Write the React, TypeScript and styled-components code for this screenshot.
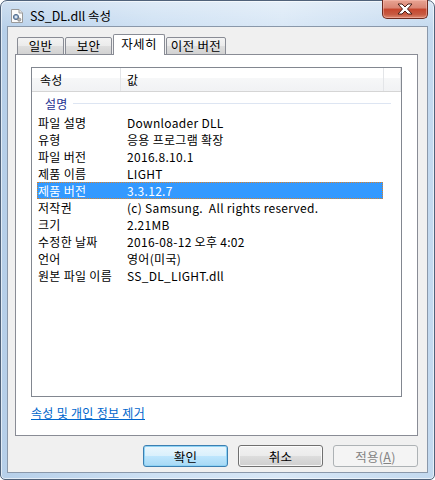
import styled, { createGlobalStyle } from "styled-components";

const GlobalStyle = createGlobalStyle`
  html, body {
    margin: 0;
    padding: 0;
    background: #ffffff;
  }
  body {
    font-family: "Noto Sans CJK KR", "Liberation Sans", sans-serif;
    font-size: 12px;
    letter-spacing: 0.3px;
    color: #000;
  }
`;

const Window = styled.div`
  box-sizing: border-box;
  width: 435px;
  height: 480px;
  display: flex;
  flex-direction: column;
  padding: 0 6px 6px 6px;
  border: 1px solid #50627a;
  border-radius: 7px 7px 5px 5px;
  background:
    linear-gradient(180deg, rgba(255, 255, 255, 0.35) 0%, rgba(255, 255, 255, 0) 30px),
    linear-gradient(90deg, #b6cfe9 0%, #cde0f3 35%, #d8e7f6 65%, #c3d9ef 100%);
  box-shadow: inset 0 0 0 1px rgba(255, 255, 255, 0.6);
`;

const TitleBar = styled.div`
  height: 27px;
  display: flex;
  align-items: flex-start;
  justify-content: space-between;
`;

const TitleLeft = styled.div`
  display: flex;
  align-items: center;
  gap: 7px;
  padding: 7px 0 0 4px;
`;

const TitleText = styled.span`
  font-size: 12.5px;
  letter-spacing: 0;
  line-height: 16px;
  color: #000;
`;

const CloseButton = styled.div`
  box-sizing: border-box;
  width: 46px;
  height: 19px;
  margin-top: -1px;
  display: flex;
  align-items: center;
  justify-content: center;
  border: 1px solid #6d2b20;
  border-top: none;
  border-radius: 0 0 5px 5px;
  background: linear-gradient(
    180deg,
    #e8a493 0%,
    #d98473 45%,
    #c6452d 50%,
    #c75a42 80%,
    #dd8a72 100%
  );
  box-shadow: inset 0 0 0 1px rgba(255, 200, 190, 0.45);
`;

const Client = styled.div`
  flex: 1;
  display: flex;
  flex-direction: column;
  border: 1px solid #8a98aa;
  background: #f0f0f0;
  padding: 7px 9px 5px 7px;
`;

const TabRow = styled.div`
  display: flex;
  align-items: flex-end;
  height: 21px;
  padding-left: 2px;
  margin-bottom: -1px;
  position: relative;
  z-index: 1;
`;

const Tab = styled.div<{ $w: number; $active?: boolean }>`
  box-sizing: border-box;
  width: ${(p) => p.$w}px;
  height: ${(p) => (p.$active ? 21 : 18)}px;
  margin-right: 1px;
  border: 1px solid #898c95;
  border-bottom: ${(p) => (p.$active ? "none" : "1px solid #898c95")};
  border-radius: 2px 2px 0 0;
  background: ${(p) =>
    p.$active
      ? "#ffffff"
      : "linear-gradient(180deg, #f3f3f3 0%, #ebebeb 50%, #dedede 50%, #d2d2d2 100%)"};
  font-size: 12.5px;
  line-height: ${(p) => (p.$active ? 17 : 16)}px;
  text-align: center;
  white-space: nowrap;
`;

const Panel = styled.div`
  box-sizing: border-box;
  height: 382px;
  display: flex;
  flex-direction: column;
  border: 1px solid #898c95;
  background: #ffffff;
  padding: 12px 15px 0 15px;
`;

const List = styled.div`
  box-sizing: border-box;
  height: 330px;
  border: 1px solid #828790;
  background: #ffffff;
  display: flex;
  flex-direction: column;
`;

const Header = styled.div`
  display: flex;
  height: 23px;
  border-bottom: 1px solid #d5d5d5;
  background: linear-gradient(180deg, #ffffff 0%, #ffffff 45%, #f6f7f8 45%, #f1f2f4 100%);
`;

const HeaderCell = styled.div<{ $w?: number; $pad: number }>`
  box-sizing: border-box;
  ${(p) => (p.$w ? `width: ${p.$w}px;` : "flex: 1;")}
  padding-left: ${(p) => p.$pad}px;
  border-right: 1px solid #e3e5e8;
  line-height: 24px;
`;

const GroupHeader = styled.div`
  display: flex;
  align-items: center;
  gap: 5px;
  height: 21px;
  padding: 1px 10px 0 13px;
`;

const GroupTitle = styled.span`
  color: #1e3291;
`;

const GroupLine = styled.div`
  flex: 1;
  height: 1px;
  background: #dde5f2;
`;

const Row = styled.div<{ $selected?: boolean }>`
  box-sizing: border-box;
  display: flex;
  width: 346px;
  height: 17px;
  margin-left: 5px;
  line-height: 15px;
  background: ${(p) => (p.$selected ? "#3399ff" : "transparent")};
  color: ${(p) => (p.$selected ? "#ffffff" : "#000000")};
  border: 1px ${(p) => (p.$selected ? "dotted #d9822b" : "solid transparent")};
  white-space: pre;
`;

const LabelCell = styled.div`
  width: 89px;
`;

const ValueCell = styled.div`
  flex: 1;
`;

const Link = styled.a`
  margin-top: 7px;
  align-self: flex-start;
  color: #0066cc;
  text-decoration: underline;
  line-height: 17px;
  cursor: pointer;
`;

const ButtonRow = styled.div`
  display: flex;
  justify-content: flex-end;
  gap: 10px;
  margin-top: 9px;
`;

const Button = styled.div<{ $variant?: "default" | "disabled" }>`
  box-sizing: border-box;
  width: 85px;
  height: 22px;
  display: flex;
  align-items: center;
  justify-content: center;
  border-radius: 3px;
  font-size: 12.5px;
  border: 1px solid
    ${(p) =>
      p.$variant === "default" ? "#3c7fb1" : p.$variant === "disabled" ? "#adb2b5" : "#707070"};
  color: ${(p) => (p.$variant === "disabled" ? "#838383" : "#000000")};
  background: ${(p) =>
    p.$variant === "default"
      ? "linear-gradient(180deg, #eaf6fd 0%, #d9f0fc 50%, #bee6fd 50%, #a7d9f5 100%)"
      : p.$variant === "disabled"
      ? "#f4f4f4"
      : "linear-gradient(180deg, #f2f2f2 0%, #ebebeb 50%, #dddddd 50%, #cfcfcf 100%)"};
  box-shadow: inset 0 0 0 1px
    ${(p) =>
      p.$variant === "default"
        ? "#8fd3f5"
        : p.$variant === "disabled"
        ? "#f4f4f4"
        : "rgba(255, 255, 255, 0.8)"};
`;

const FileIcon = () => (
  <svg width="12" height="14" viewBox="0 0 12 14">
    <path d="M0.5 0.5 H8 L11.5 4 V13.5 H0.5 Z" fill="#fbfbfb" stroke="#9a9a9a" />
    <path d="M8 0.5 V4 H11.5" fill="#e6e6e6" stroke="#9a9a9a" />
    <circle cx="5" cy="8" r="2.6" fill="#8fa9c8" stroke="#56708f" />
    <circle cx="5" cy="8" r="0.9" fill="#fff" />
    <circle cx="8.2" cy="10.6" r="1.6" fill="#b5b5b5" stroke="#777" strokeWidth="0.7" />
  </svg>
);

const CloseGlyph = () => (
  <svg width="16" height="12" viewBox="0 0 16 12">
    <path
      d="M1 1 H5 L8 4 L11 1 H15 L10.5 6 L15 11 H11 L8 8 L5 11 H1 L5.5 6 Z"
      fill="#ffffff"
      stroke="#4a1e16"
      strokeWidth="1"
      strokeLinejoin="round"
    />
  </svg>
);

const rows: [string, string][] = [
  ["파일 설명", "Downloader DLL"],
  ["유형", "응용 프로그램 확장"],
  ["파일 버전", "2016.8.10.1"],
  ["제품 이름", "LIGHT"],
  ["제품 버전", "3.3.12.7"],
  ["저작권", "(c) Samsung.  All rights reserved."],
  ["크기", "2.21MB"],
  ["수정한 날짜", "2016-08-12 오후 4:02"],
  ["언어", "영어(미국)"],
  ["원본 파일 이름", "SS_DL_LIGHT.dll"],
];

const App = () => {
  return (
    <>
      <GlobalStyle />
      <Window>
        <TitleBar>
          <TitleLeft>
            <FileIcon />
            <TitleText>SS_DL.dll 속성</TitleText>
          </TitleLeft>
          <CloseButton>
            <CloseGlyph />
          </CloseButton>
        </TitleBar>
        <Client>
          <TabRow>
            <Tab $w={47}>일반</Tab>
            <Tab $w={47}>보안</Tab>
            <Tab $w={52} $active>
              자세히
            </Tab>
            <Tab $w={60}>이전 버전</Tab>
          </TabRow>
          <Panel>
            <List>
              <Header>
                <HeaderCell $w={89} $pad={8}>
                  속성
                </HeaderCell>
                <HeaderCell $w={263} $pad={6}>
                  값
                </HeaderCell>
                <HeaderCell $pad={0} />
              </Header>
              <GroupHeader>
                <GroupTitle>설명</GroupTitle>
                <GroupLine />
              </GroupHeader>
              {rows.map(([label, value], i) => (
                <Row key={label} $selected={i === 4}>
                  <LabelCell>{label}</LabelCell>
                  <ValueCell>{value}</ValueCell>
                </Row>
              ))}
            </List>
            <Link>속성 및 개인 정보 제거</Link>
          </Panel>
          <ButtonRow>
            <Button $variant="default">확인</Button>
            <Button>취소</Button>
            <Button $variant="disabled">
              적용(<u>A</u>)
            </Button>
          </ButtonRow>
        </Client>
      </Window>
    </>
  );
};

export default App;
